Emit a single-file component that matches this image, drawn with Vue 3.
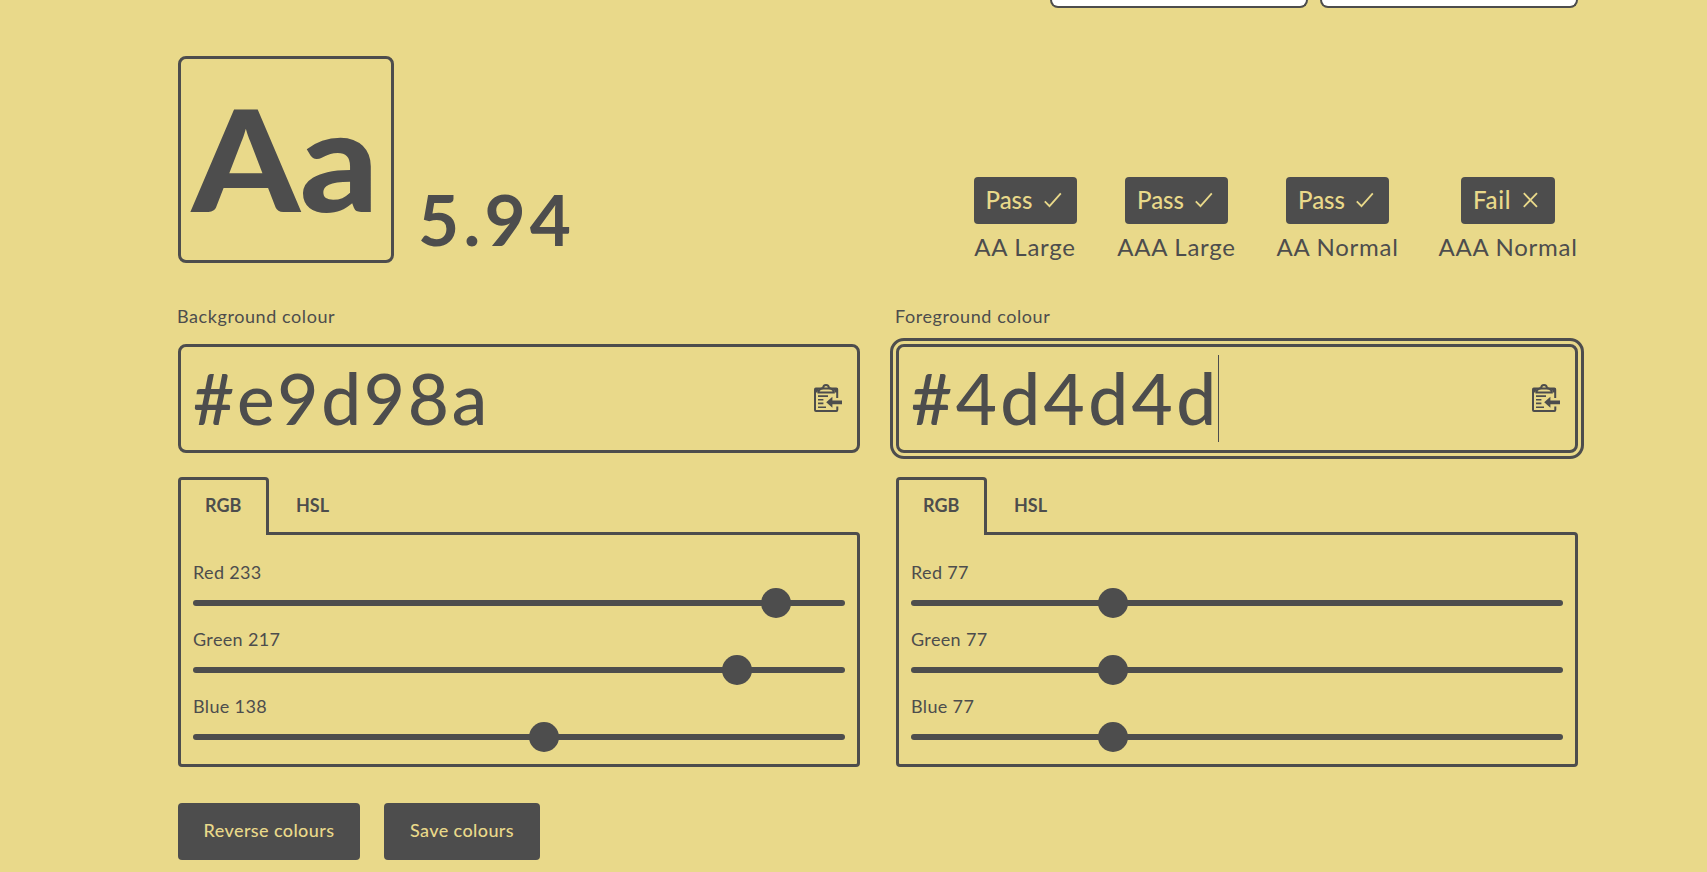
<script setup>
const results = [
  { label: 'AA Large', pass: true, key: 'aal' },
  { label: 'AAA Large', pass: true, key: 'aaal' },
  { label: 'AA Normal', pass: true, key: 'aan' },
  { label: 'AAA Normal', pass: false, key: 'aaan' },
]

const pickers = [
  {
    key: 'bg',
    title: 'Background colour',
    hex: '#e9d98a',
    focused: false,
    channels: [
      { name: 'Red', value: 233 },
      { name: 'Green', value: 217 },
      { name: 'Blue', value: 138 },
    ],
  },
  {
    key: 'fg',
    title: 'Foreground colour',
    hex: '#4d4d4d',
    focused: true,
    channels: [
      { name: 'Red', value: 77 },
      { name: 'Green', value: 77 },
      { name: 'Blue', value: 77 },
    ],
  },
]

// The 30px thumb travels 622px, so it stays inside the 652px track at both ends.
const thumbLeft = (v) => `${Math.floor((622 * v) / 255)}px`
</script>

<template>
  <main class="page">
    <div class="cards">
      <div class="card"></div>
      <div class="card"></div>
    </div>

    <section class="summary">
      <div class="sample"><span>Aa</span></div>
      <div class="ratio">5.94</div>
      <ul class="results">
        <li v-for="r in results" :key="r.key" :class="['result', r.key]">
          <span :class="['badge', { fail: !r.pass }]">
            <span class="badge-text">{{ r.pass ? 'Pass' : 'Fail' }}</span>
            <svg v-if="r.pass" class="mark" viewBox="0 0 20 20"><path d="M1.8 11.3 6.5 16.2 17.8 3.4" /></svg>
            <svg v-else class="mark" viewBox="0 0 20 20"><path d="M2.8 3.2 16 16.8M16 3.2 2.8 16.8" /></svg>
          </span>
          <span class="result-label">{{ r.label }}</span>
        </li>
      </ul>
    </section>

    <section class="pickers">
      <div v-for="p in pickers" :key="p.key" :class="['picker', p.key]">
        <div class="title"><span>{{ p.title }}</span></div>
        <div :class="['field', { focused: p.focused }]">
          <span class="hex">{{ p.hex }}</span>
          <span v-if="p.focused" class="caret"></span>
          <svg class="paste" viewBox="0 0 28 28">
            <path class="line" d="M23.2 14V5.2Q23.2 4.6 22.4 4.6H1.8Q1 4.6 1 5.4V26Q1 27 2 27H22.4Q23.3 27 23.3 26V22.4" />
            <path d="M1 4H6Q3.6 5.5 3.4 8.4H1zM23.4 4H18.2Q20.6 5.5 20.8 8.4H23.4z" />
            <path class="line" d="M4.4 8.6Q4.4 5.6 7 4.8L9.2 4Q9.2 1 12 1T14.9 4L17.2 4.8Q19.8 5.6 19.8 8.6z" />
            <path class="thin" d="M4 12.1H14M4 15.8H9.4M4 19.4H9.4M4 23.2H12" />
            <path d="M12.2 18.3 18.4 12.8V16.5H28V20.2H18.4V23.8z" />
          </svg>
        </div>
        <div class="tabs">
          <span class="tab active"><span>RGB</span></span>
          <span class="tab"><span>HSL</span></span>
        </div>
        <div class="panel">
          <div v-for="c in p.channels" :key="c.name" class="channel">
            <div class="channel-label"><span>{{ c.name }} {{ c.value }}</span></div>
            <div class="slider">
              <div class="track"></div>
              <div class="thumb" :style="{ left: thumbLeft(c.value) }"></div>
            </div>
          </div>
        </div>
      </div>
    </section>

    <div class="actions">
      <button class="reverse">Reverse colours</button>
      <button class="save">Save colours</button>
    </div>
  </main>
</template>

<style>
html,
body {
  background: #e9d98a;
  overflow: hidden;
}
</style>

<style scoped>
.page {
  box-sizing: border-box;
  width: 1707px;
  height: 872px;
  padding: 0 129px 0 178px;
  overflow: hidden;
  background: #e9d98a;
  color: #4d4d4d;
  font-family: Lato, "Liberation Sans", sans-serif;
  font-size: 18px;
  line-height: 24px;
}
.page *,
.page {
  box-sizing: border-box;
}
.cards {
  display: flex;
  justify-content: flex-end;
  gap: 12px;
  height: 8px;
  margin-bottom: 48px;
}
.card {
  width: 258px;
  background: #fff;
  border: solid #4d4d4d;
  border-width: 0 2px 2px;
  border-radius: 0 0 8px 8px;
}
.summary {
  display: flex;
  align-items: flex-end;
  height: 207px;
  margin-bottom: 41px;
}
.sample {
  display: flex;
  align-items: center;
  justify-content: center;
  width: 216px;
  height: 207px;
  padding: 0 2px 6px 0;
  border: 3px solid #4d4d4d;
  border-radius: 8px;
  font-size: 142px;
  line-height: 170px;
  font-weight: 900;
}
.sample span {
  transform: scaleX(1.085);
}
.ratio {
  margin-left: 24px;
  padding-bottom: 4px;
  font-size: 71px;
  line-height: 80px;
  font-weight: 700;
  letter-spacing: 4.2px;
}
.results {
  display: flex;
  gap: 40px;
  margin: 0 0 0 auto;
  padding: 0 0 1px;
  list-style: none;
  font-size: 24px;
  line-height: 30px;
}
.result {
  display: flex;
  flex-direction: column;
  align-items: center;
  gap: 8px;
  white-space: nowrap;
}
.result-label { letter-spacing: 0.75px; }
.aal { width: 102px; }
.aaal { width: 121px; }
.aan { width: 121px; }
.aaan { width: 140px; }
.badge {
  display: flex;
  align-items: center;
  justify-content: space-between;
  width: 103px;
  height: 47px;
  padding: 0 14px 1px 12px;
  border-radius: 4px;
  background: #4d4d4d;
  color: #e9d98a;
  font-weight: 500;
}
.badge.fail {
  width: 94px;
  letter-spacing: 0.7px;
}
.mark {
  width: 20px;
  height: 20px;
  fill: none;
  stroke: currentColor;
  stroke-width: 1.8;
}
.pickers {
  display: grid;
  grid-template-columns: 682px 682px;
  gap: 36px;
}
.title {
  margin: 0 0 16px -1px;
  letter-spacing: 0.58px;
}
.field {
  display: flex;
  align-items: center;
  height: 109px;
  padding: 0 15px 0 12px;
  border: 3px solid #4d4d4d;
  border-radius: 8px;
}
.focused {
  outline: 3px solid #4d4d4d;
  outline-offset: 3px;
}
.hex {
  padding-bottom: 1px;
  font-size: 71px;
  line-height: 80px;
  font-weight: 500;
}
.bg .hex { letter-spacing: 2.75px; }
.fg .hex { letter-spacing: 3.45px; }
.caret {
  width: 1px;
  height: 87px;
  margin-left: -2px;
  background: #4d4d4d;
}
.paste {
  width: 28px;
  height: 28px;
  margin: 0 0 1px auto;
  fill: #4d4d4d;
}
.paste .line,
.paste .thin {
  fill: none;
  stroke: #4d4d4d;
  stroke-width: 2;
}
.paste .thin { stroke-width: 1.6; }
.tabs {
  position: relative;
  z-index: 1;
  display: flex;
  height: 58px;
  margin: 24px 0 -3px;
}
.tab {
  padding: 16px 0 0 27px;
  font-weight: 700;
}
.tab.active {
  width: 91px;
  padding: 13px 0 0 24px;
  border: 3px solid #4d4d4d;
  border-bottom: 0;
  border-radius: 4px 4px 0 0;
  background: linear-gradient(#e9d98a, #e9d98a) padding-box;
}
.panel {
  height: 235px;
  padding: 25px 12px 12px;
  border: 3px solid #4d4d4d;
  border-radius: 0 4px 4px 4px;
}
.channel { height: 67px; }
.channel-label {
  margin-bottom: 4px;
  letter-spacing: 0.35px;
}
.slider {
  position: relative;
  display: flex;
  align-items: center;
  height: 30px;
}
.track {
  width: 100%;
  height: 6px;
  border-radius: 3px;
  background: #4d4d4d;
}
.thumb {
  position: absolute;
  top: 0;
  width: 30px;
  height: 30px;
  border-radius: 50%;
  background: #4d4d4d;
}
.actions {
  display: flex;
  gap: 24px;
  margin-top: 36px;
}
button {
  height: 57px;
  padding: 0 0 3px;
  border: 0;
  border-radius: 4px;
  background: #4d4d4d;
  color: #e9d98a;
  font: 500 18px/24px Lato, "Liberation Sans", sans-serif;
  letter-spacing: 0.4px;
}
.reverse { width: 182px; }
.save { width: 156px; }
</style>
